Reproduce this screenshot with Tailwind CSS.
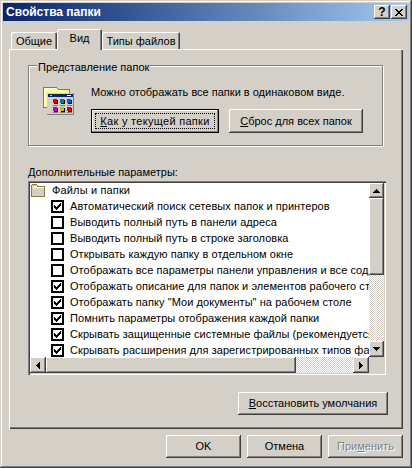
<!DOCTYPE html>
<html lang="ru">

<head>
    <meta charset="UTF-8" />
    <title>Свойства папки</title>
    <script src="https://cdn.jsdelivr.net/npm/@tailwindcss/browser@4"></script>
</head>

<body class="bg-[#d4d0c8] overflow-hidden">

    <!-- окно -->
    <div class="w-[412px] h-[468px] bg-[#d4d0c8] p-[3px] flex flex-col font-['Liberation_Sans',sans-serif] text-[11px] text-black leading-none shadow-[inset_-1px_-1px_0_#404040,inset_1px_1px_0_#d4d0c8,inset_-2px_-2px_0_#808080,inset_2px_2px_0_#fff]">

        <!-- заголовок -->
        <div class="h-[18px] shrink-0 flex items-center justify-between pl-[3px] pr-[2px] bg-gradient-to-r from-[#0a246a] to-[#a6caf0]">
            <span class="text-white font-bold text-[12px]">Свойства папки</span>
            <div class="flex gap-px">
                <div class="w-[16px] h-[14px] bg-[#d4d0c8] font-bold text-[12px] flex items-center justify-center shadow-[inset_-1px_-1px_0_#404040,inset_1px_1px_0_#fff,inset_-2px_-2px_0_#808080]">?</div>
                <div class="w-[16px] h-[14px] bg-[#d4d0c8] flex items-center justify-center shadow-[inset_-1px_-1px_0_#404040,inset_1px_1px_0_#fff,inset_-2px_-2px_0_#808080]">
                    <svg width="8" height="7" viewBox="0 0 8 7" shape-rendering="crispEdges"><path d="M0 0h2v1h1v1h2v-1h1v-1h2v1h-1v1h-1v1h-1v1h1v1h1v1h1v1h-2v-1h-1v-1h-2v1h-1v1h-2v-1h1v-1h1v-1h1v-1h-1v-1h-1v-1h-1z" /></svg>
                </div>
            </div>
        </div>

        <!-- вкладки -->
        <div class="flex h-[24px] mt-[4px] pl-[8px] items-end shrink-0">
            <div class="w-[46px] h-[17px] pt-px flex items-center justify-center rounded-t-[2px] shadow-[inset_1px_1px_0_#fff,inset_-1px_0_0_#404040,inset_-2px_0_0_#808080]">Общие</div>
            <div class="w-[45px] h-[21px] pb-[3px] flex items-center justify-center relative top-px rounded-t-[2px] shadow-[inset_1px_1px_0_#fff,inset_-1px_0_0_#404040,inset_-2px_0_0_#808080] bg-[#d4d0c8] z-10">Вид</div>
            <div class="w-[78px] h-[17px] pt-px flex items-center justify-center rounded-t-[2px] shadow-[inset_1px_1px_0_#fff,inset_-1px_0_0_#404040,inset_-2px_0_0_#808080]">Типы файлов</div>
        </div>

        <!-- панель вкладки -->
        <div class="mx-[6px] w-[394px] h-[380px] shrink-0 pt-[16px] pl-[19px] shadow-[inset_1px_1px_0_#fff,inset_-1px_-1px_0_#404040,inset_-2px_-2px_0_#808080]">

            <!-- Представление папок -->
            <div class="relative w-[355px] h-[81px] border border-[#808080] shadow-[1px_1px_0_#fff,inset_1px_1px_0_#fff] flex pl-[14px] pt-[18px]">
                <span class="absolute left-[8px] top-[-4px] bg-[#d4d0c8] px-px">Представление папок</span>
                <svg class="w-[32px] h-[32px] shrink-0" viewBox="0 0 32 32" shape-rendering="crispEdges">
                    <path d="M0.5 3.5h13l2 2h11v18h-26z" fill="#fff799" stroke="#808040" />
                    <path d="M1.5 4.5h11M1.5 4.5v18" fill="none" stroke="#fffde0" />
                    <rect x="4" y="9" width="27" height="22" fill="#808080" />
                    <rect x="4" y="9" width="26" height="21" fill="#d4d0c8" />
                    <rect x="5" y="10" width="25" height="3" fill="#0a246a" />
                    <rect x="7" y="11" width="2" height="1" fill="#ffcc00" />
                    <rect x="24" y="11" width="4" height="1" fill="#fff" />
                    <g>
                        <rect x="11" y="16" width="4" height="4" fill="#000" /><rect x="10" y="15" width="4" height="4" fill="#e00000" /><rect x="10" y="21" width="5" height="1" fill="#808080" />
                        <rect x="18" y="16" width="4" height="4" fill="#000" /><rect x="17" y="15" width="4" height="4" fill="#008080" /><rect x="17" y="21" width="5" height="1" fill="#808080" />
                        <rect x="25" y="16" width="4" height="4" fill="#000" /><rect x="24" y="15" width="4" height="4" fill="#0060e0" /><rect x="24" y="21" width="5" height="1" fill="#808080" />
                        <rect x="11" y="24" width="4" height="4" fill="#000" /><rect x="10" y="23" width="4" height="4" fill="#c000c0" /><rect x="10" y="28" width="5" height="1" fill="#808080" />
                        <rect x="18" y="24" width="4" height="4" fill="#000" /><rect x="17" y="23" width="4" height="4" fill="#c0c000" /><rect x="17" y="28" width="5" height="1" fill="#808080" />
                        <rect x="25" y="24" width="4" height="4" fill="#000" /><rect x="24" y="23" width="4" height="4" fill="#e00000" /><rect x="24" y="28" width="5" height="1" fill="#808080" />
                    </g>
                </svg>
                <div class="pl-[16px] flex flex-col">
                    <span class="mt-[3px]">Можно отображать все папки в одинаковом виде.</span>
                    <div class="flex gap-[10px] mt-[11px]">
                        <div class="relative w-[128px] h-[24px] flex items-center justify-center outline outline-1 outline-black -outline-offset-1 shadow-[inset_-2px_-2px_0_#808080,inset_2px_2px_0_#fff]">
                            <span class="tracking-[0.3px]"><u>К</u>ак у текущей папки</span>
                            <div class="absolute inset-[4px] border border-dotted border-black"></div>
                        </div>
                        <div class="w-[134px] h-[24px] flex items-center justify-center shadow-[inset_-1px_-1px_0_#404040,inset_1px_1px_0_#fff,inset_-2px_-2px_0_#808080]"><span><u>С</u>брос для всех папок</span></div>
                    </div>
                </div>
            </div>

            <div class="mt-[21px] mb-[3px]">Дополнительные параметры:</div>

            <!-- список -->
            <div class="w-[358px] h-[194px] p-[2px] flex flex-col shadow-[inset_1px_1px_0_#808080,inset_2px_2px_0_#404040,inset_-1px_-1px_0_#fff,inset_-2px_-2px_0_#d4d0c8]">
                <div class="flex h-[174px] shrink-0">
                    <div class="w-[339px] bg-white overflow-hidden whitespace-nowrap tracking-[0.06px]">
                        <div class="h-[15px] flex items-center">
                            <svg class="ml-[1px] w-[14px] h-[13px] shrink-0" viewBox="0 0 14 13" shape-rendering="crispEdges"><path d="M0.5 12.5v-11l1-1h4l1 1v1h7v10z" fill="#d4d0c8" stroke="#808040" /><path d="M1.5 2.5h4" stroke="#fff799" /><path d="M1.5 3.5h11" stroke="#fffde0" /></svg>
                            <span class="ml-[7px] tracking-[0.15px]">Файлы и папки</span>
                        </div>
                        <div id="rows"></div>
                    </div>

                    <!-- вертикальная прокрутка -->
                    <div class="w-[15px] flex flex-col">
                        <div class="h-[15px] shrink-0 bg-[#d4d0c8] flex items-center justify-center shadow-[inset_-1px_-1px_0_#404040,inset_1px_1px_0_#fff,inset_-2px_-2px_0_#808080]">
                            <svg width="7" height="4" viewBox="0 0 7 4" shape-rendering="crispEdges"><path d="M3 0h1v1h1v1h1v1h1v1h-7v-1h1v-1h1v-1h1z" /></svg>
                        </div>
                        <div class="h-[77px] shrink-0 bg-[#d4d0c8] shadow-[inset_-1px_-1px_0_#404040,inset_1px_1px_0_#fff,inset_-2px_-2px_0_#808080]"></div>
                        <div class="flex-1 bg-[repeating-conic-gradient(#fff_0_25%,#d4d0c8_0_50%)] bg-[length:2px_2px]"></div>
                        <div class="h-[16px] shrink-0 bg-[#d4d0c8] flex items-center justify-center shadow-[inset_-1px_-1px_0_#404040,inset_1px_1px_0_#fff,inset_-2px_-2px_0_#808080]">
                            <svg width="7" height="4" viewBox="0 0 7 4" shape-rendering="crispEdges"><path d="M0 0h7v1h-1v1h-1v1h-1v1h-1v-1h-1v-1h-1v-1h-1z" /></svg>
                        </div>
                    </div>
                </div>

                <!-- горизонтальная прокрутка -->
                <div class="flex h-[16px] shrink-0">
                    <div class="w-[16px] shrink-0 flex items-center justify-center shadow-[inset_-1px_-1px_0_#404040,inset_1px_1px_0_#fff,inset_-2px_-2px_0_#808080]">
                        <svg width="4" height="7" viewBox="0 0 4 7" shape-rendering="crispEdges"><path d="M3 0h1v7h-1v-1h-1v-1h-1v-1h-1v-1h1v-1h1v-1h1z" /></svg>
                    </div>
                    <div class="w-[250px] shrink-0 shadow-[inset_-1px_-1px_0_#404040,inset_1px_1px_0_#fff,inset_-2px_-2px_0_#808080]"></div>
                    <div class="w-[57px] shrink-0 bg-[repeating-conic-gradient(#fff_0_25%,#d4d0c8_0_50%)] bg-[length:2px_2px]"></div>
                    <div class="w-[16px] shrink-0 flex items-center justify-center shadow-[inset_-1px_-1px_0_#404040,inset_1px_1px_0_#fff,inset_-2px_-2px_0_#808080]">
                        <svg width="4" height="7" viewBox="0 0 4 7" shape-rendering="crispEdges"><path d="M0 0h1v1h1v1h1v1h1v1h-1v1h-1v1h-1v1h-1z" /></svg>
                    </div>
                </div>
            </div>

            <div class="w-[360px] flex justify-end mt-[17px]">
                <div class="w-[150px] h-[23px] flex items-center justify-center shadow-[inset_-1px_-1px_0_#404040,inset_1px_1px_0_#fff,inset_-2px_-2px_0_#808080]"><span><u>В</u>осстановить умолчания</span></div>
            </div>
        </div>

        <!-- кнопки диалога -->
        <div class="flex justify-end gap-[6px] mt-[6px] pr-[6px]">
            <div class="w-[75px] h-[23px] flex items-center justify-center shadow-[inset_-1px_-1px_0_#404040,inset_1px_1px_0_#fff,inset_-2px_-2px_0_#808080]">OK</div>
            <div class="w-[75px] h-[23px] flex items-center justify-center shadow-[inset_-1px_-1px_0_#404040,inset_1px_1px_0_#fff,inset_-2px_-2px_0_#808080]">Отмена</div>
            <div class="w-[75px] h-[23px] flex items-center justify-center text-[#808080] [text-shadow:1px_1px_0_#fff] shadow-[inset_-1px_-1px_0_#404040,inset_1px_1px_0_#fff,inset_-2px_-2px_0_#808080]"><span>При<u>м</u>енить</span></div>
        </div>
    </div>

    <script>
        const options = [
            ["Автоматический поиск сетевых папок и принтеров", true],
            ["Выводить полный путь в панели адреса", false],
            ["Выводить полный путь в строке заголовка", false],
            ["Открывать каждую папку в отдельном окне", false],
            ["Отображать все параметры панели управления и все содержимое дисков", false],
            ["Отображать описание для папок и элементов рабочего стола", true],
            ["Отображать папку \"Мои документы\" на рабочем столе", true],
            ["Помнить параметры отображения каждой папки", true],
            ["Скрывать защищенные системные файлы (рекомендуется)", true],
            ["Скрывать расширения для зарегистрированных типов файлов", true],
        ];

        const check = '<svg width="9" height="9" viewBox="0 0 9 9" shape-rendering="crispEdges"><path d="M7 1h1v3h-1v1h-1v1h-1v1h-1v1h-1v-1h-1v-1h-1v-3h1v1h1v1h1v-1h1v-1h1v-1h1z" /></svg>';

        document.getElementById("rows").innerHTML = options.map(([label, on]) => `
            <div class="h-[16px] flex items-center pl-[21px]">
                <div class="w-[13px] h-[13px] shrink-0 border-2 border-black bg-white flex items-center justify-center">${on ? check : ""}</div>
                <span class="ml-[6px]">${label}</span>
            </div>`).join("");
    </script>
</body>

</html>
